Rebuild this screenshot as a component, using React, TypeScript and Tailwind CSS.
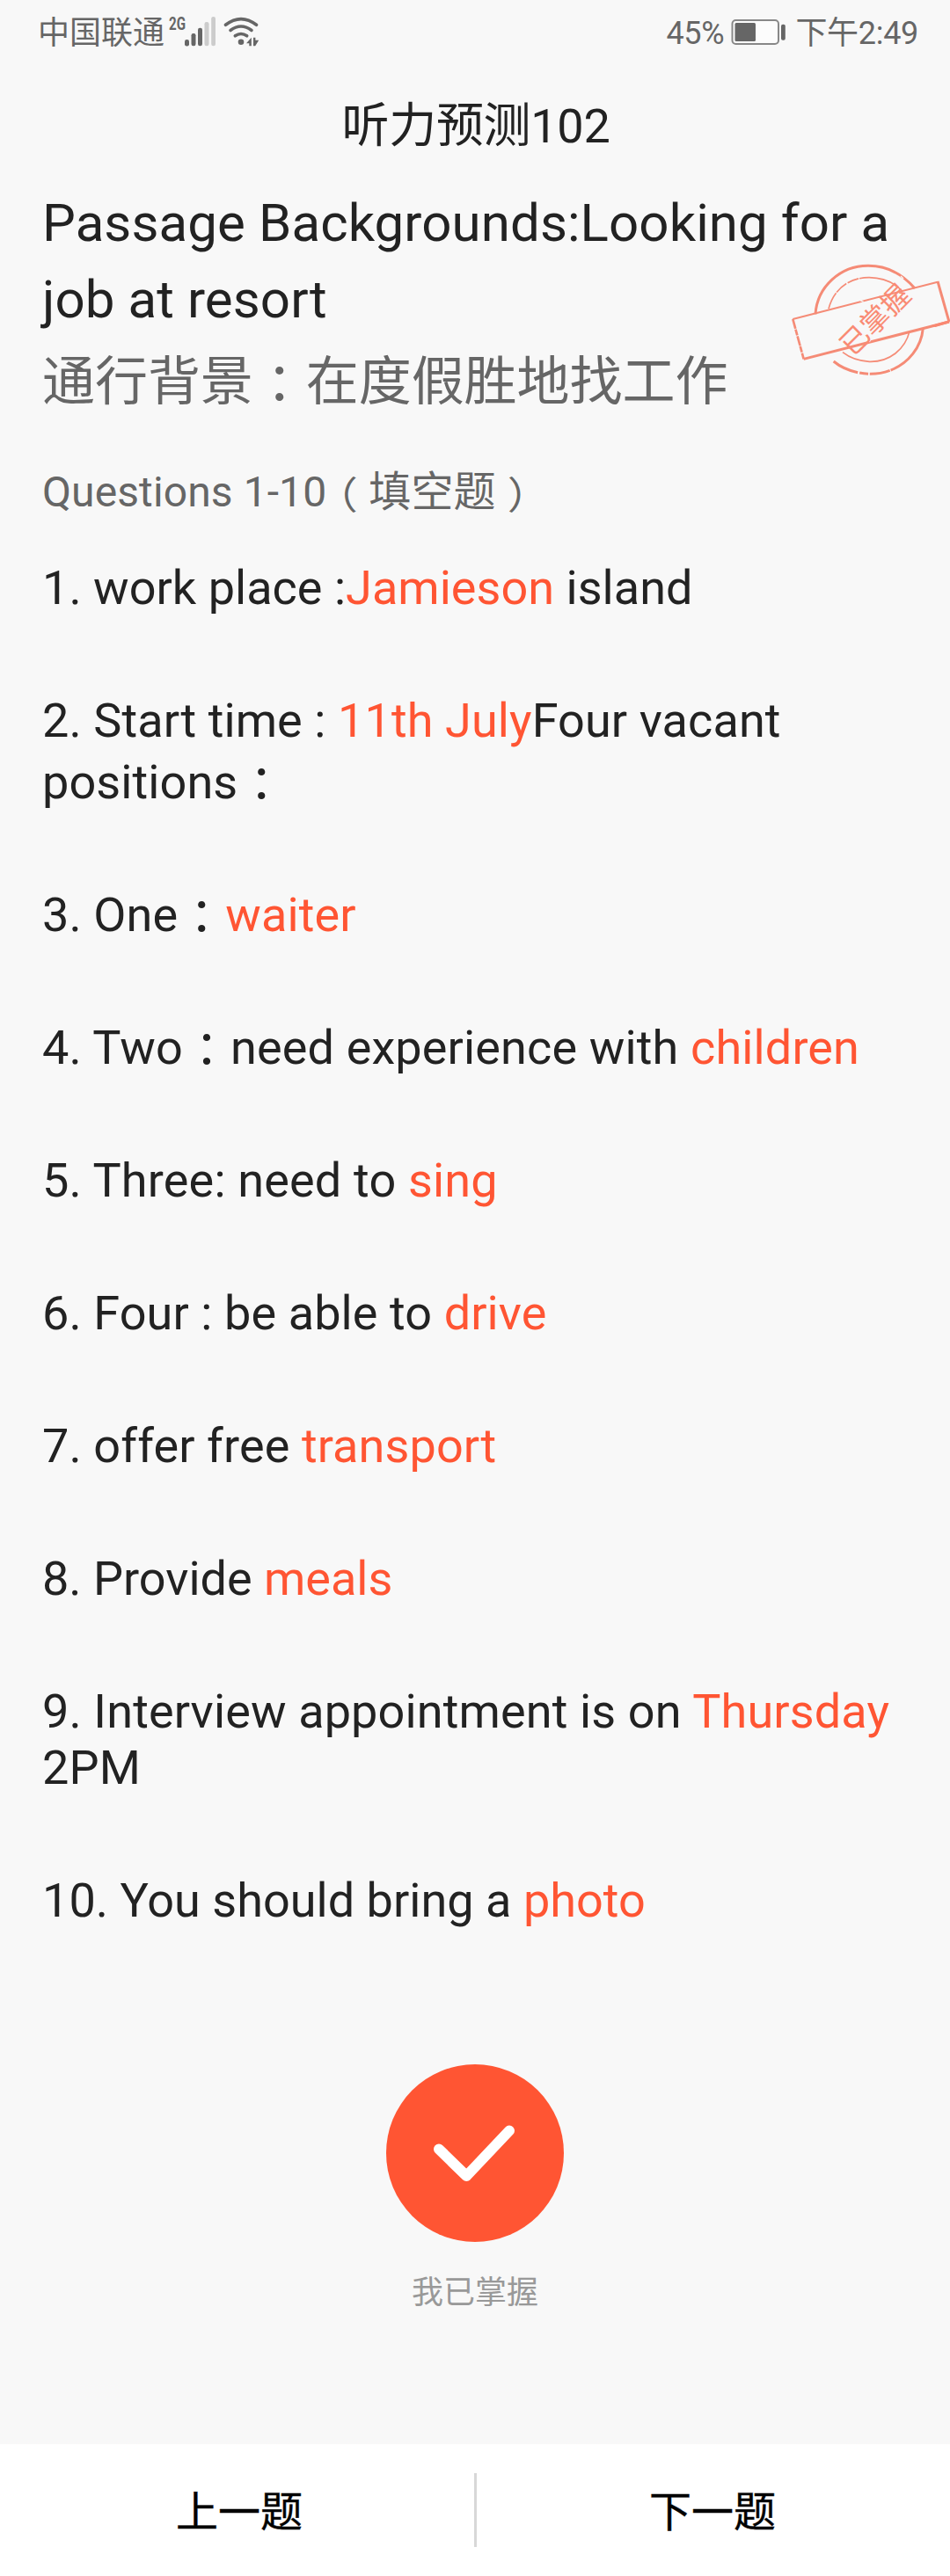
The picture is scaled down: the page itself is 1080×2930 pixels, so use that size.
import React from "react";

type Part = string | { hl: string };

const ITEMS: { parts: Part[]; tracking: string }[] = [
  { parts: ["1. work place :", { hl: "Jamieson" }, " island"], tracking: "tracking-[0.03px]" },
  { parts: ["2. Start time : ", { hl: "11th July" }, "Four vacant"], tracking: "tracking-[0.1px]" },
  { parts: ["3. One：", { hl: "waiter" }], tracking: "tracking-[0.1px]" },
  { parts: ["4. Two：need experience with ", { hl: "children" }], tracking: "tracking-[0.14px]" },
  { parts: ["5. Three: need to ", { hl: "sing" }], tracking: "tracking-[0.18px]" },
  { parts: ["6. Four : be able to ", { hl: "drive" }], tracking: "tracking-[0.1px]" },
  { parts: ["7. offer free ", { hl: "transport" }], tracking: "tracking-[0.12px]" },
  { parts: ["8. Provide ", { hl: "meals" }], tracking: "tracking-normal" },
  { parts: ["9. Interview appointment is on ", { hl: "Thursday" }], tracking: "tracking-[0.13px]" },
  { parts: ["10. You should bring a ", { hl: "photo" }], tracking: "tracking-[0.03px]" },
];

// Wrapped second lines, keyed by item index
const TAILS: Record<number, { text: string; cls: string }> = {
  1: { text: "positions：", cls: "block pt-[7px]" },
  8: { text: "2PM", cls: "block pt-px" },
};

// Full-width punctuation sits in the middle of its cell
const WIDE: Record<string, string> = {
  "：": "relative left-[0.25em] top-[0.02em]",
  "（": "inline-block -translate-x-[0.26em] translate-y-[0.1em] scale-y-90",
  "）": "inline-block translate-x-[0.27em] translate-y-[0.1em] scale-y-90",
};

function Wide({ children }: { children: string }) {
  return (
    <>
      {children.split(/([：（）])/).map((s, i) =>
        WIDE[s] ? <span key={i} className={WIDE[s]}>{s}</span> : s
      )}
    </>
  );
}

function StatusBar() {
  return (
    <div className="flex h-[76px] items-center justify-between pl-[43px] pr-[36px] text-[36px] leading-[42px] text-[#666666]">
      <div className="flex items-center">
        <span>中国联通</span>
        <svg className="ml-[3px] overflow-visible" width="112" height="42" viewBox="190 17 112 42" fill="#666666">
          <text x="192" y="34" fontSize="21" fontWeight="700" textLength="19" lengthAdjust="spacingAndGlyphs">2G</text>
          <rect x="210" y="45" width="5" height="7.5" rx="2.2" />
          <rect x="217.5" y="38" width="5" height="14.3" rx="2.2" />
          <rect x="225" y="31.7" width="5" height="20.6" rx="2.2" />
          <rect x="232.5" y="25" width="5" height="27.3" rx="2.2" fill="#cccccc" />
          <rect x="240.2" y="19" width="4.8" height="33.3" rx="2.2" fill="#cccccc" />
          <g fill="none" stroke="#666666" strokeWidth="3.6" strokeLinecap="round">
            <path d="M256.500 28.300q17.500-13.500 35 0" />
            <path d="M262 34.500q12-9 24 0" />
            <path d="M267.300 40.800q6.700-4.600 13.400 0" />
          </g>
          <circle cx="274" cy="47.7" r="3.3" />
          <path d="M280 49.300l5.800-6.500v9.500h-2.500v-3zM288 42.800h2.400v3h3.800l-4 6.500h-2.200z" />
        </svg>
      </div>
      <div className="flex items-center tracking-[-0.3px]">
        <span>45%</span>
        <svg className="ml-[8px] mr-[9px]" width="64" height="42" viewBox="831 17 64 42">
          <rect x="832.5" y="23" width="52.5" height="27" rx="4" fill="#fcfcfc" stroke="#888888" strokeWidth="2" />
          <rect x="835.5" y="26" width="23.5" height="21" rx="1.5" fill="#666666" />
          <rect x="888" y="27.7" width="4.8" height="18" rx="2" fill="#666666" />
        </svg>
        <span>下午2:49</span>
      </div>
    </div>
  );
}

function Stamp() {
  return (
    <svg className="absolute left-[900px] top-[296px]" width="180" height="136" viewBox="60 48 540 408" fill="none" stroke="#f58b76" role="img">
      <path d="M141 232C147 140 225 66 322 67C385 67 440 98 480 144" strokeWidth="9" />
      <path d="M508 280C500 370 420 438 325 436C275 434 232 417 203 393" strokeWidth="9" strokeDasharray="190 3 70 5 30 6 300" />
      <path d="M186 214C204 145 258 106 325 107C370 108 410 124 438 154" strokeWidth="5" strokeDasharray="60 3 45 5 40 3 200" />
      <path d="M462 290C448 350 395 396 325 394C290 392 258 381 234 362" strokeWidth="5" />
      <path d="M64 249L558 122" strokeWidth="6" />
      <path d="M64 249L101 385" strokeWidth="8" strokeDasharray="34 2 21 3" />
      <path d="M101 385L597 258" strokeWidth="9" />
      <path d="M558 120L597 258" strokeWidth="9" />
      <path d="M535 271L598 252V262L550 276Z" fill="#f98872" stroke="none" />
      <path d="M432 102l9 9M295 186l10 4M189 380l7 3M324 326l5-4" stroke="#f8f8f8" strokeWidth="4" />
      <text x="0" y="0" transform="translate(266 379) rotate(-45)" fill="#f98b74" stroke="none" fontSize="97">已掌握</text>
    </svg>
  );
}

export default function App() {
  return (
    <div className="relative flex h-[2930px] w-[1080px] flex-col overflow-hidden whitespace-pre bg-[#f8f8f8] font-['Roboto','Noto_Sans_CJK_SC',sans-serif] text-[#222222]">
      <StatusBar />
      <h1 className="mt-[36px] pl-[2px] text-center text-[54px] leading-[64px] tracking-[-0.3px]">听力预测102</h1>
      <Stamp />
      <main className="flex flex-col px-12">
        <h2 className="mt-[34px] text-[60px] leading-[87px] tracking-[0.1px]">Passage Backgrounds:Looking for a<br />job at resort</h2>
        <p className="mt-[9px] text-[60px] leading-[84px] tracking-[-0.05px] text-[#666666]"><Wide>通行背景：在度假胜地找工作</Wide></p>
        <p className="mt-[51px] h-[64px] text-[48px] leading-[64px] tracking-[0.1px] text-[#666666]"><Wide>Questions 1-10（填空题）</Wide></p>
        <ol className="mt-[45px] flex flex-col gap-[88px] text-[54px] leading-[63px]">
          {ITEMS.map(({ parts, tracking }, i) => (
            <li key={i} className={tracking}>
              {parts.map((p, j) =>
                typeof p === "string" ? <Wide key={j}>{p}</Wide> : <span key={j} className="text-[#ff5533]">{p.hl}</span>
              )}
              {TAILS[i] && <span className={TAILS[i].cls}><Wide>{TAILS[i].text}</Wide></span>}
            </li>
          ))}
        </ol>
      </main>
      <div className="mt-[155px] flex flex-col items-center">
        <button className="flex size-[202px] items-center justify-center rounded-full bg-[#ff5533]">
          <svg width="202" height="202" viewBox="0 0 202 202" fill="none" stroke="#fff" strokeWidth="12" strokeLinecap="round" strokeLinejoin="round">
            <path d="M60 96.500l31.300 30.500 48.700-51.500" />
          </svg>
        </button>
        <span className="mt-[33px] text-[36px] leading-[50px] text-[#999999]">我已掌握</span>
      </div>
      <footer className="mt-auto flex h-[150px] shrink-0 items-center bg-white text-[48px] text-black [-webkit-text-stroke:0.4px_black]">
        <button className="w-[539px] pl-[5px] pt-[5px]">上一题</button>
        <div className="h-[84px] w-[3px] bg-[#d8d8d8]" />
        <button className="flex-1 pr-[2px] pt-[5px]">下一题</button>
      </footer>
    </div>
  );
}
